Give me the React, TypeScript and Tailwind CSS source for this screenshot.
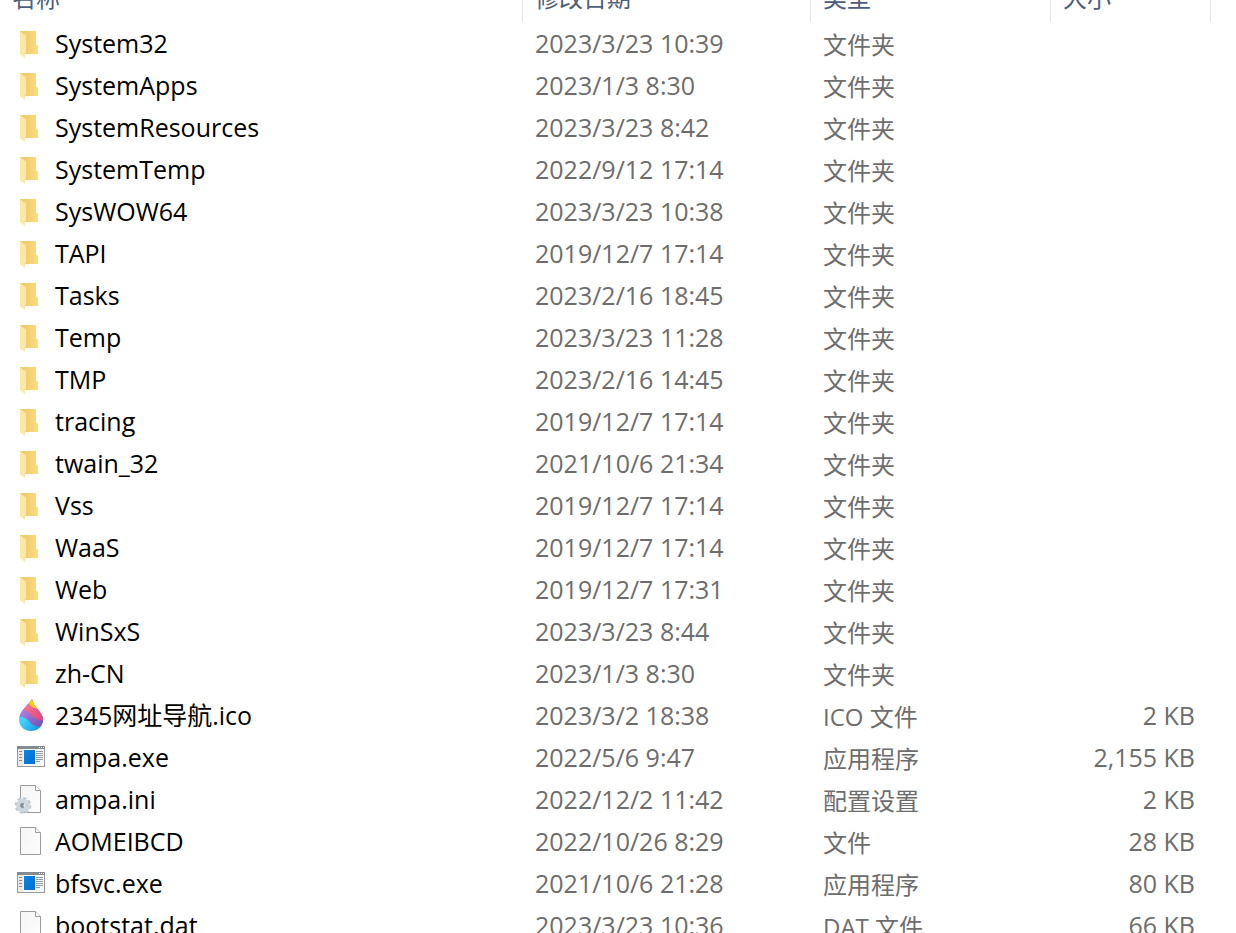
import type { ReactNode } from 'react';

type IconKind = 'folder' | 'drop' | 'exe' | 'ini' | 'file';

interface FileEntry {
  name: string;
  date: string;
  type: string;
  icon: IconKind;
  size?: string;
}

const folder = (name: string, date: string): FileEntry => ({ name, date, type: '文件夹', icon: 'folder' });

const ENTRIES: FileEntry[] = [
  folder('System32', '2023/3/23 10:39'),
  folder('SystemApps', '2023/1/3 8:30'),
  folder('SystemResources', '2023/3/23 8:42'),
  folder('SystemTemp', '2022/9/12 17:14'),
  folder('SysWOW64', '2023/3/23 10:38'),
  folder('TAPI', '2019/12/7 17:14'),
  folder('Tasks', '2023/2/16 18:45'),
  folder('Temp', '2023/3/23 11:28'),
  folder('TMP', '2023/2/16 14:45'),
  folder('tracing', '2019/12/7 17:14'),
  folder('twain_32', '2021/10/6 21:34'),
  folder('Vss', '2019/12/7 17:14'),
  folder('WaaS', '2019/12/7 17:14'),
  folder('Web', '2019/12/7 17:31'),
  folder('WinSxS', '2023/3/23 8:44'),
  folder('zh-CN', '2023/1/3 8:30'),
  { name: '2345网址导航.ico', date: '2023/3/2 18:38', type: 'ICO 文件', icon: 'drop', size: '2 KB' },
  { name: 'ampa.exe', date: '2022/5/6 9:47', type: '应用程序', icon: 'exe', size: '2,155 KB' },
  { name: 'ampa.ini', date: '2022/12/2 11:42', type: '配置设置', icon: 'ini', size: '2 KB' },
  { name: 'AOMEIBCD', date: '2022/10/26 8:29', type: '文件', icon: 'file', size: '28 KB' },
  { name: 'bfsvc.exe', date: '2021/10/6 21:28', type: '应用程序', icon: 'exe', size: '80 KB' },
  { name: 'bootstat.dat', date: '2023/3/23 10:36', type: 'DAT 文件', icon: 'file', size: '66 KB' },
];

function IconDefs() {
  return (
    <svg width="0" height="0" className="absolute" aria-hidden="true">
      <defs>
        <linearGradient id="folderBack" x1="0" y1="0" x2="1" y2="0">
          <stop offset="0%" stopColor="#ecc868" />
          <stop offset="50%" stopColor="#f3d074" />
          <stop offset="100%" stopColor="#fbdd85" />
        </linearGradient>
        <linearGradient id="folderFlap" x1="0" y1="0" x2="1" y2="1">
          <stop offset="0%" stopColor="#ffe79c" />
          <stop offset="100%" stopColor="#fdeaa9" />
        </linearGradient>
        <linearGradient id="paper" x1="0" y1="0" x2="1" y2="1">
          <stop offset="0%" stopColor="#f4f5f6" />
          <stop offset="100%" stopColor="#fdfdfd" />
        </linearGradient>
        <linearGradient id="exeBlue" x1="0" y1="0" x2="1" y2="1">
          <stop offset="0%" stopColor="#0a85e6" />
          <stop offset="100%" stopColor="#006fd0" />
        </linearGradient>
        <linearGradient id="dropBlue" x1="0" y1="0" x2="1" y2="1">
          <stop offset="45%" stopColor="#3fd0fb" />
          <stop offset="100%" stopColor="#0c7fd8" />
        </linearGradient>
        <linearGradient id="dropPurple" x1="0" y1="0" x2="1" y2="1">
          <stop offset="30%" stopColor="#b17be0" />
          <stop offset="100%" stopColor="#6f4cb0" />
        </linearGradient>
        <linearGradient id="dropPink" x1="0" y1="0" x2="1" y2="1">
          <stop offset="30%" stopColor="#f8708f" />
          <stop offset="100%" stopColor="#d8437e" />
        </linearGradient>
        <clipPath id="dropShape">
          <path d="M17 -1 C14.5 4 4 11 4 19.5 C4 26.5 9.5 31 16 31 C22.500 31 28 26.500 28 19.500 C28 12 18.500 8 17 -1 Z" />
        </clipPath>
      </defs>
    </svg>
  );
}

function Sheet() {
  return (
    <>
      <path d="M5.500 1.500 H20.500 L25.500 6.500 V28.500 H5.500 Z" fill="url(#paper)" stroke="#9b9b9b" />
      <path d="M20.500 1.500 V6.500 H25.500" fill="#ffffff" stroke="#9b9b9b" />
    </>
  );
}

const ICONS: Record<IconKind, ReactNode> = {
  folder: (
    <>
      <path d="M5 3 H21 V16.500 L23 18 V26 H10 Z" fill="url(#folderBack)" />
      <path d="M5 3 L11 7.500 V24 L10 25.500 V30 L5 26.500 Z" fill="url(#folderFlap)" />
    </>
  ),
  drop: (
    <g clipPath="url(#dropShape)">
      <rect x="3" y="-1" width="26" height="33" fill="url(#dropBlue)" />
      <path d="M3 17 C9 16 12 19 15 22.500 C18 26 22 27.500 28 26 L30 20 V-1 H3 Z" fill="url(#dropPurple)" />
      <path d="M4 10 C10 9 13 11.500 16 15 C19 18.500 23 20.500 30 20 V-1 H4 Z" fill="url(#dropPink)" />
      <path d="M12 3 C14 3.500 15 5 16.500 6.500 C18 8 20 8.500 24 8 V-2 H12 Z" fill="#ffd500" />
    </g>
  ),
  exe: (
    <>
      <rect x="2.500" y="4.500" width="27" height="20" fill="#f7f7f7" stroke="#959a9e" />
      <path d="M2 4 H30 V7 H2 Z" fill="#858c91" />
      <path d="M24 5 h1 v1 h-1 Z M26 5 h1 v1 h-1 Z M28 5 h1 v1 h-1 Z" fill="#ffffff" />
      <path d="M3 7 H8 V24 H3 Z" fill="#e9e9e9" />
      <path d="M4 9.500 H7 M4 12.500 H7 M4 15.500 H7 M4 18.500 H7" stroke="#8c8c8c" />
      <rect x="9" y="8" width="11" height="14" fill="url(#exeBlue)" />
      <path d="M21 9.500 H28 M21 11.500 H28 M21 13.500 H28 M21 15.500 H28 M21 17.500 H28 M21 19.500 H25" stroke="#9a9a9a" />
    </>
  ),
  ini: (
    <>
      <Sheet />
      <circle cx="8" cy="21.500" r="6.800" fill="none" stroke="#b9c5ce" strokeWidth="3" strokeDasharray="3 2.340" />
      <circle cx="8" cy="21.500" r="4.500" fill="#f4f4f4" stroke="#cdd6dc" strokeWidth="5" />
      <path d="M8.500 19.500 A2.200 2.200 0 1 0 8.500 23.500 A4 4 0 0 1 8.500 19.500 Z" fill="#81909b" stroke="#81909b" />
    </>
  ),
  file: <Sheet />,
};

function EntryIcon({ kind }: { kind: IconKind }) {
  return (
    <svg width="32" height="32" viewBox="0 0 32 32" className="shrink-0 overflow-visible" aria-hidden="true">
      {ICONS[kind]}
    </svg>
  );
}

function HeaderCell({ label, inset }: { label: string; inset: string }) {
  return (
    <th scope="col" className="h-[23px] p-0 text-left align-top font-normal">
      <div className={`flex h-[22px] items-end border-r border-[#e5e5e5] pb-2 ${inset}`}>
        <span className="text-[24px] leading-[32px] text-[#4c607a]">{label}</span>
      </div>
    </th>
  );
}

export default function App() {
  return (
    <main className="h-screen overflow-hidden bg-white font-['Open_Sans','Noto_Sans_CJK_SC',sans-serif] text-[#6d6d6d]">
      <IconDefs />
      <table className="w-full table-fixed border-collapse">
        <colgroup>
          <col />
          <col className="w-[288px]" />
          <col className="w-[240px]" />
          <col className="w-[160px]" />
          <col className="w-[25px]" />
        </colgroup>
        <thead>
          <tr>
            <HeaderCell label="名称" inset="pl-3" />
            <HeaderCell label="修改日期" inset="pl-3" />
            <HeaderCell label="类型" inset="pl-3" />
            <HeaderCell label="大小" inset="pl-3" />
            <td />
          </tr>
        </thead>
        <tbody className="whitespace-nowrap text-[25px] leading-[40px]">
          {ENTRIES.map((entry) => (
            <tr key={entry.name} className="hover:bg-[#e5f3ff]">
              <td className="p-0">
                <div className="flex h-[42px] items-center gap-2 pl-[15px] text-black">
                  <EntryIcon kind={entry.icon} />
                  <span className="pb-0.5">{entry.name}</span>
                </div>
              </td>
              <td className="h-[42px] p-0 pb-0.5 pl-3">{entry.date}</td>
              <td className="h-[42px] p-0 pt-0.5 pl-3 text-[24px]">{entry.type}</td>
              <td className="h-[42px] p-0 pr-4 pb-0.5 text-right">{entry.size}</td>
              <td />
            </tr>
          ))}
        </tbody>
      </table>
    </main>
  );
}
